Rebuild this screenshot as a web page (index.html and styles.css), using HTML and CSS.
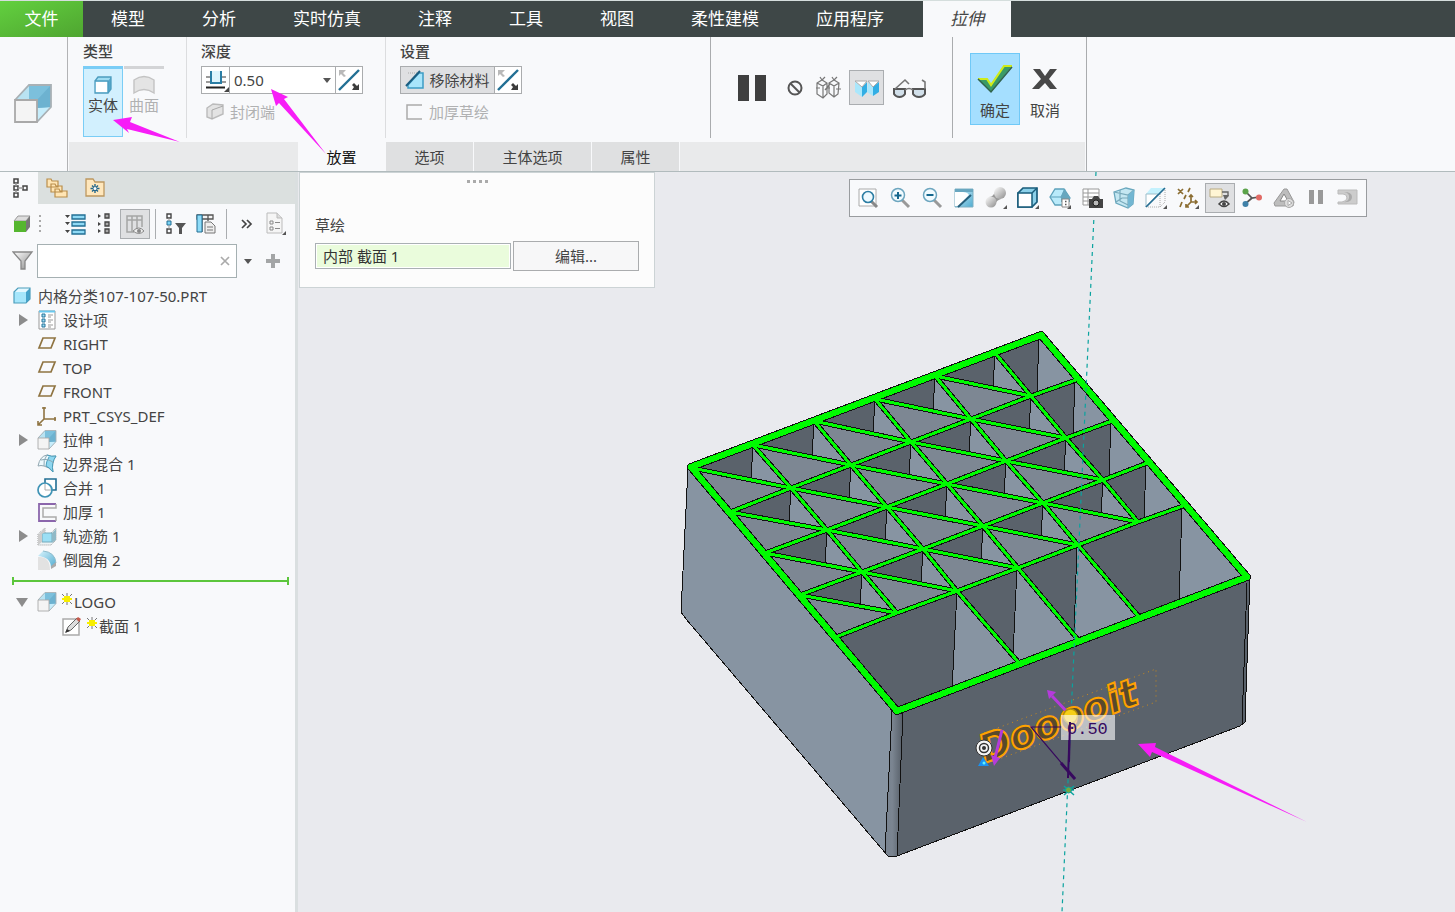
FILE: index.html
```html
<!DOCTYPE html>
<html lang="zh-CN">
<head>
<meta charset="utf-8">
<meta name="viewport" content="width=device-width, initial-scale=1">
<title>拉伸</title>
<link rel="stylesheet" href="styles.css">
</head>
<body>
<svg class="sprite" aria-hidden="true">
  <defs>
    <linearGradient id="blue" x1="0" y1="0" x2="1" y2="1"><stop offset="0" stop-color="#d9f4fd"/><stop offset="1" stop-color="#4fabd0"/></linearGradient>
    <linearGradient id="grey" x1="0" y1="0" x2="1" y2="1"><stop offset="0" stop-color="#ffffff"/><stop offset="1" stop-color="#8b8b8b"/></linearGradient>
    <symbol id="extrude" viewBox="0 0 40 40"><path d="M2 16 16 1h22v22L24 38z" fill="#7cc0dc"/><path d="M2 16 16 1v15z" fill="#b9e3f2"/><path d="M24 38V24l14-1z" fill="#c6edfb"/><path d="M24 16 38 1v22L24 24z" fill="#6db2d0"/><path d="M2 16 16 1h22v22L24 38" fill="none" stroke="#a9b1b5" stroke-width="1.800"/><path d="M2 16h22v22H2z" fill="#f4f4f4" stroke="#a9a9a9" stroke-width="1.800"/></symbol>
    <symbol id="plane" viewBox="0 0 20 20"><path d="M6 4h12l-4 10H2z" fill="none" stroke="#8f7442" stroke-width="1.700"/></symbol>
    <symbol id="flip" viewBox="0 0 24 24"><path d="M2 22 22 2" stroke="#226f94" stroke-width="2.400"/><path d="M2 2h7L6 5l3 3-2 1-3-3-2 2z" fill="#b9b9b9"/><path d="M22 22h-7l2-3-2-2 2-2 3 3 2-2z" fill="#3c3c3c"/></symbol>
    <symbol id="spark" viewBox="0 0 10 12"><path d="M0 1l10 10M10 1 0 11M5 0v12" stroke="#777" stroke-width="1"/><path d="M0 5h10v2H0zM2 3h6v6H2z" fill="#f7ee00"/></symbol>
    <symbol id="list" viewBox="0 0 22 22"><path d="M0 2h5L2.500 5zM0 9h5l-2.500 3zM0 17h5l-2.500 3z" fill="#444"/><g fill="#8ed9f5" stroke="#226f94" stroke-width="1.300"><path d="M7 2h13v4H7zM7 9h13v4H7zM7 17h13v4H7z"/></g></symbol>
  </defs>
</svg>

<header>
  <nav class="tabs">
    <button class="tab file">文件</button><button class="tab">模型</button><button class="tab">分析</button><button class="tab">实时仿真</button><button class="tab">注释</button><button class="tab">工具</button><button class="tab">视图</button><button class="tab">柔性建模</button><button class="tab">应用程序</button><button class="tab current">拉伸</button>
  </nav>
  <div class="ribbon">
    <div class="feature"><svg width="40" height="40"><use href="#extrude"/></svg></div>
    <div class="dashboard">
      <div class="groups">
        <section class="group type">
          <h2>类型</h2>
          <div class="row tight">
            <button class="kind on"><svg width="18" height="18" viewBox="0 0 18 18"><path d="M1 5 4 1h13l-3 4z" fill="#9edcf2"/><path d="M14 5l3-4v12l-3 4z" fill="#55a8cc"/><path d="M1 5h13v12H1zM1 5l3-4h13v12l-3 4" fill="none" stroke="#4c9cbe" stroke-width="1.300"/><path d="M2 6h11v10H2z" fill="#fff"/></svg>实体</button>
            <button class="kind" disabled><svg width="22" height="20" viewBox="0 0 22 20"><path d="M1 5q10-7 20 0v13q-10-7-20 0z" fill="#e4e4e4" stroke="#c3c3c3" stroke-width="1.400"/></svg>曲面</button>
          </div>
        </section>
        <section class="group depth">
          <h2>深度</h2>
          <div class="combo">
            <button aria-label="深度选项"><svg width="26" height="24" viewBox="0 0 26 24"><path d="M3 9h20M3 14h20" stroke="#9b9b9b" stroke-width="2"/><path d="M8 3h10v13H8z" fill="#dff5fd"/><path d="M8 3v12h10V3" fill="none" stroke="#2b7ea5" stroke-width="2"/><path d="M3 19.500h19" stroke="#222" stroke-width="2"/><path d="M26 19v5h-5z" fill="#444"/></svg></button>
            <input aria-label="深度值" value="0.50">
            <button class="drop" aria-label="深度列表"><i class="down"></i></button>
            <button aria-label="反向"><svg width="24" height="24"><use href="#flip"/></svg></button>
          </div>
          <button class="plain" disabled><svg width="18" height="18" viewBox="0 0 18 18"><path d="M1 5l6-4 10 1v9l-11 5-5-2z" fill="#e3e3e3" stroke="#bbb" stroke-width="1.400"/><path d="M6 7l11-4M6 7v9" stroke="#aaa" fill="none"/></svg>封闭端</button>
        </section>
        <section class="group setup">
          <h2>设置</h2>
          <div class="combo">
            <button class="remove"><svg width="20" height="20" viewBox="0 0 20 20"><path d="M3 3h12" stroke="#aaa" stroke-dasharray="1 1"/><path d="M18 3v15H3v-3L14 3z" fill="#a8e5fb" stroke="#3c9cc5" stroke-width="1.500"/><path d="M1 16 15 1" stroke="#1b5d80" stroke-width="2"/></svg>移除材料</button>
            <button aria-label="反向材料侧"><svg width="24" height="24"><use href="#flip"/></svg></button>
          </div>
          <button class="plain" disabled><svg width="18" height="18" viewBox="0 0 18 18"><path d="M17 2H2v14h15" fill="none" stroke="#aaa" stroke-width="1.500"/></svg>加厚草绘</button>
        </section>
        <section class="group preview">
          <button aria-label="暂停"><svg width="30" height="28"><path d="M1 1h11v26H1zM18 1h11v26H18z" fill="#3f3f3f"/></svg></button>
          <button class="none" aria-label="无预览"><svg width="18" height="18"><circle cx="9" cy="9" r="6.500" fill="none" stroke="#555" stroke-width="2"/><path d="M4.500 4.500l9 9" stroke="#555" stroke-width="2"/></svg></button>
          <button aria-label="分离"><svg width="26" height="24" viewBox="0 0 26 24"><path d="M2 7l5-3 5 3v11l-4 4-6-4zM2 7l6 3 4-3M8 10v12M14 7l5-3 5 3-1 11-4 3-5-4zM14 7l5 3 5-3M19 10v11M5 1l2 3M10 1 7 4M17 1l2 3M22 1l-3 3M1 12h4M21 13h5M12 12h3M10 14l5-6" fill="none" stroke="#777" stroke-width="1.200"/></svg></button>
          <button class="pressed" aria-label="连接"><svg width="26" height="20" viewBox="0 0 26 20"><path d="M1 4 8 9v10l-7-5zM14 4l5 5v9l-6-4z" fill="#a9e7fc"/><path d="M8 9l5-5v10l-5 5zM19 9l6-5v10l-6 4z" fill="#32aee4"/><path d="M1 3h12L8 9zM14 3h11l-6 6z" fill="#fff" stroke="#aaa"/></svg></button>
          <button aria-label="特征预览"><svg width="36" height="22" viewBox="0 0 36 22"><path d="M2 12h11v5q-2 3-5.500 3T2 17zM21 12h12v5q-2 3-6 3t-6-3z" fill="#d2e0ea" stroke="#555" stroke-width="2"/><path d="M13 13q4-3 8 0M3 12 13 3l4 4M33 12V5l-3-2" fill="none" stroke="#777" stroke-width="1.600"/></svg></button>
        </section>
        <section class="group finish">
          <button class="ok"><svg width="38" height="30" viewBox="0 0 38 30"><path d="M2 15h9l4 6L28 2h8L15 28z" fill="#3a9b67"/><path d="M2 15h9l4 6L28 2h8" fill="none" stroke="#cfec19" stroke-width="2.200"/><path d="M2 15l13 13L36 3" fill="none" stroke="#31634c" stroke-width="1.500"/></svg>确定</button>
          <button><svg width="26" height="30" viewBox="0 0 26 30"><path d="M1 5h7l5 7 5-7h7l-8 10 8 10h-7l-5-6-6 6H0l9-10z" fill="#484848"/></svg>取消</button>
        </section>
      </div>
      <nav class="subtabs"><button class="open">放置</button><button>选项</button><button>主体选项</button><button>属性</button></nav>
    </div>
    <svg class="pointers" width="400" height="180" aria-hidden="true"><path d="M113 120 132 117 130 122 180 142 127 129 129 133zM271 89 288 97 284 99 326 154 279 103 276 106z" fill="#f71df7"/></svg>
  </div>
</header>

<main>
  <aside>
    <div class="side-tabs">
      <button class="active" aria-label="模型树"><svg width="18" height="22" viewBox="0 0 18 22"><g fill="none" stroke="#444" stroke-width="1.500"><path d="M3 2h4v4H3zM3 9h4v4H3zM12 9h4v4h-4zM3 16h4v4H3z"/><path d="M5 6v3M5 13v3M7 11h5" stroke="#999"/></g></svg></button>
      <button aria-label="文件夹浏览器"><svg width="22" height="22" viewBox="0 0 22 22"><g fill="#ffe5b4" stroke="#ba8e4b" stroke-width="1.200"><path d="M1 2h4l1 2h6v6H1zM5 7h4l1 2h6v6H5zM9 12h4l1 2h7v6H9z"/></g></svg></button>
      <button aria-label="收藏夹"><svg width="22" height="20" viewBox="0 0 22 20"><path d="M2 4V1h7l2 3h9v14H2z" fill="#ffe7bc" stroke="#bd9860" stroke-width="1.300"/><path d="M11 6v9M6.500 10.500h9M8 7.500l6 6M14 7.500l-6 6" stroke="#24678c" stroke-width="1.400"/><circle cx="11" cy="10.500" r="1.500" fill="#fff"/></svg></button>
    </div>
    <div class="side-tools">
      <button aria-label="模型"><svg width="18" height="18" viewBox="0 0 18 18"><path d="M1 6 5 1h12l-4 5z" fill="#ddd" stroke="#999"/><path d="M13 6l4-5v11l-4 5z" fill="#777"/><path d="M1 6h12v11H1z" fill="#55b62f"/></svg></button>
      <svg class="grip" width="4" height="18"><path d="M2 0v18" stroke="#aaa" stroke-width="2" stroke-dasharray="2 3"/></svg>
      <button class="list" aria-label="展开"><svg width="22" height="22"><use href="#list"/></svg></button>
      <button aria-label="收起"><svg width="16" height="22" viewBox="0 0 16 22"><path d="M1 1l3 2-3 2zM1 9l3 2-3 2zM1 16l3 2-3 2z" fill="#444"/><path d="M8 1h4v4H8zM8 9h4v4H8zM8 16h4v4H8z" fill="#aaa" stroke="#444" stroke-width="1.300"/></svg></button>
      <button class="pressed" aria-label="树列"><svg width="20" height="22" viewBox="0 0 20 22"><path d="M2 3h15v4H2zM2 3v16h5V3M12 3v13M17 3v11M7 19h2" fill="none" stroke="#a5a5a5" stroke-width="1.500"/><path d="M8 18q6-6 11 0-5 5-11 0z" fill="#eee" stroke="#888"/><circle cx="14" cy="18" r="2" fill="#888"/></svg></button>
      <span class="bar"></span>
      <button aria-label="树过滤器"><svg width="22" height="22" viewBox="0 0 22 22"><path d="M2 1h4v4H2zM2 16h4v4H2z" fill="none" stroke="#444" stroke-width="1.400"/><path d="M2 8h4v4H2z" fill="#7bd4f5" stroke="#226f94"/><path d="M4 5v3M4 12v4" stroke="#999"/><path d="M10 10h11l-4 5v6h-3v-6z" fill="#555"/></svg></button>
      <button aria-label="列设置"><svg width="22" height="22" viewBox="0 0 22 22"><path d="M2 2h16v4H2zM7 2v17M13 2v6" fill="#f3f3f3" stroke="#555" stroke-width="1.300"/><path d="M2 2h5v17H2z" fill="#8edcf8" stroke="#226f94"/><path d="M10 9h6l4 4v7H10z" fill="#eee" stroke="#777"/><path d="M12 14h6M12 17h6" stroke="#777"/></svg></button>
      <span class="bar"></span>
      <button class="more" aria-label="更多"><svg width="12" height="10"><path d="M1 1l4 4-4 4M6 1l4 4-4 4" fill="none" stroke="#444" stroke-width="1.700"/></svg></button>
      <button class="report" aria-label="显示"><svg width="22" height="24" viewBox="0 0 22 24"><path d="M2 1h10l5 5v15H2z" fill="#f5f5f5" stroke="#bbb"/><path d="M12 1v5h5" fill="#ddd" stroke="#bbb"/><path d="M5 9h3v3H5zM5 15h3v3H5z" fill="none" stroke="#888"/><path d="M10 10.500h5M10 16.500h5" stroke="#888"/><path d="M21 19v4h-4z" fill="#555"/></svg></button>
    </div>
    <div class="search">
      <svg width="22" height="20" viewBox="0 0 22 20"><path d="M1 1h19l-7 9v8H9v-8z" fill="url(#grey)" stroke="#888" stroke-width="1.300"/></svg>
      <div class="box"><input aria-label="搜索模型树"><button aria-label="清除"><svg width="10" height="10"><path d="M1 1l8 8M9 1 1 9" stroke="#aaa" stroke-width="1.700"/></svg></button></div>
      <button aria-label="搜索选项"><i class="down"></i></button>
      <button class="add" aria-label="添加"><svg width="14" height="14"><path d="M7 0v14M0 7h14" stroke="#a3a5a6" stroke-width="4"/></svg></button>
    </div>
    <ul class="tree">
      <li class="root"><svg viewBox="0 0 20 20"><path d="M2 6 6 2h12l-4 4z" fill="#e4f8ff"/><path d="M14 6l4-4v11l-4 4z" fill="#45a3cb"/><path d="M2 6h12v11H2z" fill="#a6e6fb"/><path d="M2 6 6 2h12v11l-4 4H2z" fill="none" stroke="#4b9dbc" stroke-width="1.200"/></svg>内格分类107-107-50.PRT</li>
      <li><button class="twist" aria-label="展开设计项"></button><svg viewBox="0 0 20 20"><path d="M2 1h16v18H2z" fill="#fff" stroke="#999"/><path d="M2 1.500h16" stroke="#68c8ee" stroke-width="2"/><path d="M5 4h3v3H5zM5 9h3v3H5zM5 14h3v3H5z" fill="#9cdcf2" stroke="#28749b"/><path d="M11 5h5M11 7h3M11 10h5M11 12h3M11 15h5M11 17h3" stroke="#999"/></svg>设计项</li>
      <li><span class="twist none"></span><svg><use href="#plane"/></svg>RIGHT</li>
      <li><span class="twist none"></span><svg><use href="#plane"/></svg>TOP</li>
      <li><span class="twist none"></span><svg><use href="#plane"/></svg>FRONT</li>
      <li><span class="twist none"></span><svg viewBox="0 0 20 20"><path d="M7 1v12h12M7 13l-6 6M5 2h4M18 11v4M1 15v4h4" fill="none" stroke="#8f7442" stroke-width="1.600"/></svg>PRT_CSYS_DEF</li>
      <li><button class="twist" aria-label="展开拉伸 1"></button><svg><use href="#extrude"/></svg>拉伸 1</li>
      <li><span class="twist none"></span><svg viewBox="0 0 20 20"><path d="M1 12Q3 2 10 1q5 2 9 1-5 7-3 16-4-5-9-6-3-1-6 0z" fill="#eef9fd" stroke="#92a7b1"/><path d="M10 1q5 2 9 1-5 7-3 16-4-5-7-6 0-4 3-9" fill="#8ed6ef" stroke="#4a9dbb"/><path d="M4 6q7-2 13 3M10 1Q6 6 7 12" fill="none" stroke="#8ba8b4"/></svg>边界混合 1</li>
      <li><span class="twist none"></span><svg viewBox="0 0 20 20"><path d="M8 1h11v11h-3" fill="#fff"/><circle cx="8" cy="12" r="7" fill="#fff"/><path d="M8 5V1h11v11h-4" fill="none" stroke="#226f94" stroke-width="1.600"/><path d="M8 5v7h7" fill="none" stroke="#aaa"/><path d="M15 12a7 7 0 1 1-7-7q2 0 4 1.500 3 2 3 5.500" fill="none" stroke="#4094b6" stroke-width="1.700"/></svg>合并 1</li>
      <li><span class="twist none"></span><svg viewBox="0 0 20 20"><path d="M19 2H2v17h17" fill="none" stroke="#8b66ac" stroke-width="1.800"/><path d="M19 2v4H6v9h13v4" fill="none" stroke="#aaa" stroke-width="1.500"/></svg>加厚 1</li>
      <li><button class="twist" aria-label="展开轨迹筋 1"></button><svg viewBox="0 0 20 20"><path d="M1 19V8l7-6v8h3l8-8v12l-5 5H1" fill="#edf3f5" stroke="#999" stroke-dasharray="1 1"/><path d="M5 7h10v9H5z" fill="#9bdff5" stroke="#75aabc"/><path d="M15 7l4-4v11l-4 3z" fill="#90b9c7"/><path d="M1 9l7-7v4L5 8v8l-4 3z" fill="#ccc"/></svg>轨迹筋 1</li>
      <li><span class="twist none"></span><svg viewBox="0 0 20 20"><path d="M1 7q12-1 12 13H1z" fill="#e2e2e2"/><path d="M1 6 6 1q12 1 13 12l-5 5Q14 7 1 6z" fill="url(#blue)"/><path d="M6 1q12 1 13 12" fill="none" stroke="#8fbccc"/><path d="M14 19v-3l5-4v4z" fill="#aaa"/></svg>倒圆角 2</li>
      <li class="marker" aria-hidden="true"><span></span></li>
      <li><button class="twist expanded" aria-label="收起 LOGO"></button><svg><use href="#extrude"/></svg><svg class="spark"><use href="#spark"/></svg>LOGO</li>
      <li class="child"><svg viewBox="0 0 20 20"><path d="M1 3h16v16H1z" fill="#fff" stroke="#aaa" stroke-width="1.500"/><path d="M4 16l2-5L15 2l3 3-9 9z" fill="#ddd" stroke="#666"/><path d="M14 3l2-2 3 2-2 3z" fill="#c45a4d"/><path d="M3 17l2-4 3 2z" fill="#333"/></svg><svg class="spark"><use href="#spark"/></svg>截面 1</li>
    </ul>
  </aside>

  <section class="canvas" aria-label="图形窗口">
    <svg class="model" viewBox="298 172 1157 740" preserveAspectRatio="xMinYMin slice">
      <defs><linearGradient id="round"><stop offset="0" stop-color="#788390"/><stop offset=".4" stop-color="#7b8591"/><stop offset="1" stop-color="#555d66"/></linearGradient></defs>
      <g shape-rendering="crispEdges" stroke="#111" stroke-width="1">
        <path d="M688 468 681 612 686 619 887 855 897 711z" fill="#8794a2"/>
        <path d="M897 711 1250 576 1245 722 1240 726 897 856z" fill="#5a626b"/>
        <path d="M892 711 885 853 889 857 897 856 903 712z" fill="url(#round)"/>
        <path d="M1247 583 1242 724" fill="none"/>
      </g>
      <g id="lattice" shape-rendering="crispEdges"></g>
      <path d="M1096 172 1062 912" stroke="#0aa39f" stroke-dasharray="4 4" stroke-width="1.200" fill="none"/>
      <path d="M984 733 1156 669V702L988 763" fill="none" stroke="#c98a1d" stroke-dasharray="1 4"/>
      <text class="engraving" transform="translate(985 763) rotate(-21)">Dooooit</text>
      <g stroke="#37095e" fill="none"><path d="M1070 722 1068 778" stroke-width="2"/><path d="M1062 727H1031l44 52" stroke-width="1.200"/><path d="M1061 763l14 16" stroke-width="3"/></g>
      <g stroke="#b53bdb" fill="#b53bdb"><path d="M1069 714 1052 696M1002 730 995 758" stroke-width="3"/><path d="M1047 690l9 2-7 7zM994 766l-3-11 9 3z" stroke="none"/></g>
      <circle cx="1070.500" cy="716" r="7" fill="#f6cf16" stroke="#b28e09" stroke-width="1.500"/>
      <g><circle cx="984" cy="748" r="8" fill="#f5f5f5" stroke="#333"/><circle cx="984" cy="748" r="4.500" fill="none" stroke="#333" stroke-width="1.500"/><circle cx="984" cy="748" r="2" fill="#333"/><path d="M983 757l6 9h-11z" fill="#1a91f2"/><circle cx="984" cy="763" r="1.500" fill="#5ff1ff"/></g>
      <path d="M1064 786l10 9M1074 786l-10 9M1063 790h11" stroke="#0aa39f" stroke-width="1.500"/><circle cx="1068.500" cy="790" r="3" fill="#74a741" stroke="#0aa39f"/>
      <rect x="1061" y="715" width="54" height="25" fill="#fff" fill-opacity=".6"/>
      <text class="dimension" x="1067" y="734">0.50</text>
      <path d="M1070 722 1069 762" stroke="#37095e" stroke-width="2"/>
      <path d="M1138 744 1156 743 1155 747 1307 822 1152 752 1150 757z" fill="#f71df7"/>
    </svg>

    <form class="placement">
      <span class="dots" aria-hidden="true"><i></i><i></i><i></i><i></i></span>
      <label for="sketch">草绘</label>
      <div class="row"><input id="sketch" value="内部 截面 1"><button type="button">编辑...</button></div>
    </form>

    <div class="view-tools">
      <button aria-label="重新调整"><svg viewBox="0 0 22 22"><path d="M2 2h17v17H2z" fill="#fff" stroke="#aaa"/><path d="M14 14l6 6" stroke="#888" stroke-width="3"/><circle cx="11" cy="10" r="5.500" fill="#eefaff" stroke="#2d7ea4" stroke-width="1.600"/></svg></button>
      <button aria-label="放大"><svg viewBox="0 0 22 22"><path d="M13 13l7 7" stroke="#999" stroke-width="3"/><circle cx="9" cy="8" r="6.500" fill="#f1fbff" stroke="#6da6bf" stroke-width="1.500"/><path d="M9 5v7M5.500 8.500h7" stroke="#14678e" stroke-width="2"/></svg></button>
      <button aria-label="缩小"><svg viewBox="0 0 22 22"><path d="M13 13l7 7" stroke="#999" stroke-width="3"/><circle cx="9" cy="8" r="6.500" fill="#f1fbff" stroke="#6da6bf" stroke-width="1.500"/><path d="M5.500 8h7" stroke="#14678e" stroke-width="2"/></svg></button>
      <button aria-label="重画"><svg viewBox="0 0 22 22"><path d="M2 2h18v18H2z" fill="url(#blue)" stroke="#7fb0c3"/><path d="M2 5q12-1 14 3L6 19H2z" fill="#fff"/><path d="M5 20 18 8" stroke="#265f7b" stroke-width="2"/><path d="M2 2h18v3H2z" fill="#69a7c0"/></svg></button>
      <button aria-label="渲染"><svg viewBox="0 0 22 22"><path d="M4 10q4 0 6-5l6 7q-4 1-6 5z" fill="#999"/><circle cx="15" cy="6" r="6" fill="url(#grey)"/><circle cx="6" cy="15" r="5.500" fill="url(#grey)"/><path d="M22 18v4h-4z" fill="#555"/></svg></button>
      <button aria-label="显示样式"><svg viewBox="0 0 22 22"><path d="M1 6 6 1h14v14l-5 5H1z" fill="#8bd0e9" stroke="#195c7b" stroke-width="1.700"/><path d="M1 6h14v14H1z" fill="#fff" stroke="#195c7b" stroke-width="1.500"/><path d="M15 6l5-5" stroke="#195c7b" stroke-width="1.500"/><path d="M22 18v4h-4z" fill="#555"/></svg></button>
      <button aria-label="已保存方向"><svg viewBox="0 0 22 22"><path d="M1 10 6 2h9l6 9-5 7H6z" fill="#b9eafa" stroke="#5ca1bb" stroke-width="1.300"/><path d="M1 10h11l4-8M12 10l4 8" fill="none" stroke="#5ca1bb"/><path d="M15 2l6 9v4h-9v-5z" fill="#67a7be"/><path d="M13 12h7v8h-7z" fill="#fff" stroke="#888"/><path d="M16 14.500h1.500M16 17.500h1.500" stroke="#555" stroke-width="1.500"/><path d="M22 18v4h-4z" fill="#555"/></svg></button>
      <button aria-label="视图管理器"><svg viewBox="0 0 22 22"><path d="M2 2h16v16H2zM2 6h16M2 10h16M2 14h10M7 2v16" fill="#fff" stroke="#999"/><path d="M8 12h3l2-3h4l2 3h3v9H8z" fill="#444"/><circle cx="15" cy="16" r="3" fill="#bbb" stroke="#222"/></svg></button>
      <button aria-label="透视图"><svg viewBox="0 0 22 22"><path d="M1 5 13 1l8 2-1 14-5 4-12-5z" fill="#c4e7f2" stroke="#6aa8be" stroke-width="1.300"/><path d="M1 5l14 3 6-5M15 8v13M7 3v11l8 4M3 15l6-4h11" fill="none" stroke="#78a9ba" stroke-width="1.200"/><path d="M15 8l6-5-1 14-5 4z" fill="#72b6d2"/></svg></button>
      <button aria-label="截面"><svg viewBox="0 0 22 22"><path d="M1 7 6 1h14L6 16H1z" fill="#c4f1fd"/><path d="M1 7h12L1 20z" fill="#fff" stroke="#9dbdca"/><path d="M20 3v12l-5 5H2M15 7v13" fill="none" stroke="#aaa" stroke-dasharray="1 1"/><path d="M1 20 20 1" stroke="#256c91" stroke-width="1.700"/><path d="M22 18v4h-4z" fill="#555"/></svg></button>
      <button aria-label="基准显示"><svg viewBox="0 0 22 22"><path d="M1 2l5 5M6 2 1 7M13 1l-2 4M9 8l-2 4M5 15l-2 5M14 8v7h6M14 15l-5 5M12 10l2-2 2 2M18 13l2 2-2 2M9 17v3h3" fill="none" stroke="#8b6d32" stroke-width="1.700"/><path d="M22 18v4h-4z" fill="#555"/></svg></button>
      <button class="pressed" aria-label="注释显示"><svg viewBox="0 0 22 22"><path d="M1 2h12v8H1z" fill="#fff5d4" stroke="#b8aa82"/><path d="M13 5h6v4l-3 3" fill="none" stroke="#666" stroke-width="1.400"/><path d="M14 8h6l-4 5z" fill="#666"/><path d="M10 17q5-6 10 0-5 5-10 0z" fill="#fff" stroke="#444" stroke-width="1.500"/><circle cx="15" cy="17" r="2" fill="#444"/></svg></button>
      <button aria-label="旋转中心"><svg viewBox="0 0 22 22"><path d="M5 5l6 6 7-1M11 11l-7 6" fill="none" stroke="#555" stroke-width="1.700"/><circle cx="4.500" cy="4.500" r="3" fill="#5ba34a"/><circle cx="18" cy="10.500" r="3" fill="#e16a65"/><circle cx="4.500" cy="17" r="3" fill="#3f81a8"/></svg></button>
      <button aria-label="模拟"><svg viewBox="0 0 22 22"><path d="M11 2h3l7 13-1 4H2l-1-3z" fill="#bdbdbd" stroke="#999"/><path d="M11 7l4 7H7z" fill="#fff" stroke="#888"/><circle cx="16" cy="16" r="4.500" fill="#ddd" stroke="#aaa"/><path d="M15 13.500l4 2.500-4 2.500z" fill="#fff" stroke="#aaa"/></svg></button>
      <button aria-label="暂停模拟"><svg viewBox="0 0 22 22"><path d="M4 3h5v14H4zM13 3h5v14h-5z" fill="#999"/></svg></button>
      <button aria-label="模拟结果"><svg viewBox="0 0 22 22"><path d="M1 3h19v14H1v-2h4q5-1 5-4 0-4-4-4H1z" fill="#ccc" stroke="#bbb"/><path d="M7 5q6 1 5 6-1 4-6 4 9 1 9-5 0-5-8-5" fill="#aaa"/></svg></button>
    </div>
  </section>
</main>
<script src="lattice.js"></script>
</body>
</html>
```

FILE: styles.css
```css
* { box-sizing: border-box; }
body {
  margin: 0;
  min-height: 100vh;
  display: flex;
  flex-direction: column;
  overflow: hidden;
  background: #f8f9fb;
  color: #444;
  font: 15px/20px "Noto Sans", "Noto Sans CJK SC", sans-serif;
}
button, input { font: inherit; color: inherit; border: 0; padding: 0; background: none; min-width: 0; border-radius: 0; }
button { display: flex; align-items: center; justify-content: center; }
svg { display: block; flex: none; }
.sprite { position: absolute; width: 0; height: 0; }
.down { border: 4px solid transparent; border-top: 5px solid #555; border-bottom: 0; }
.pressed { background: #dfe0e2; border: 1px solid #aaadb0; }
.row { display: flex; }

.tabs { display: flex; height: 37px; background: #3e4747; border-top: 1px solid #d5dedd; color: #fff; font-size: 17px; }
.tab { padding: 0 29px 0 28px; white-space: nowrap; }
.file { width: 83px; padding: 0; background: linear-gradient(160deg, #62d03f, #4fa530); }
.current { width: 88px; padding: 0; margin-left: 10px; background: #f8f9fb; color: #444; font-style: italic; }

.ribbon { position: relative; display: flex; height: 135px; border-bottom: 1px solid #b1bbbd; }
.feature { width: 68px; padding: 47px 0 0 13px; border-right: 1px solid #b2b3b5; }
.dashboard { width: 1019px; display: flex; flex-direction: column; border-right: 1px solid #aaacae; }
.groups { flex: 1; display: flex; }
.group { padding: 4px 0 0 14px; margin-bottom: 4px; border-right: 1px solid #dcdddf; }
.group h2 { margin: 0 0 5px; font-size: 15px; font-weight: 500; line-height: 20px; color: #444; }
.type { width: 119px; padding-left: 15px; }
.depth { width: 199px; }
.setup { width: 325px; border-right-color: #aaacae; }
.tight { gap: 1px; }
.kind { width: 40px; height: 71px; flex-direction: column; justify-content: flex-start; padding-top: 6px; border-top: 3px solid #d3d4d6; }
.kind svg { height: 20px; }
.kind.on { background: #d2f0fe; border: 1px solid #7acdf6; border-top-width: 3px; }
.kind:disabled, .plain:disabled { color: #b0b1b2; }
.combo { display: flex; width: max-content; height: 28px; border: 1px solid #aaacae; background: #fff; }
.combo > button + button, .combo input { border-left: 1px solid #aaacae; }
.combo button { min-width: 27px; }
.combo input { width: 90px; padding-left: 4px; }
.combo .drop { min-width: 16px; border-left: 0; }
.combo .remove { width: 93px; gap: 4px; background: #dfe0e2; }
.plain { gap: 6px; margin: 8px 0 0 5px; }
.preview { width: 242px; display: flex; align-items: center; gap: 8px; padding: 0 0 0 26px; border-right-color: #aaacae; }
.preview button:first-child { margin-right: 8px; }
.preview .none { width: 24px; }
.preview .pressed { width: 35px; height: 35px; }
.finish { flex: 1; display: flex; align-items: flex-start; padding: 16px 0 0 17px; border: 0; }
.finish button { width: 50px; height: 72px; flex-direction: column; gap: 6px; padding-top: 6px; }
.finish .ok { background: #a5dfff; border: 1px solid #70c9f7; }
.subtabs { display: flex; height: 29px; margin: 0 1px; padding-left: 229px; background: #e9eaeb; }
.subtabs button { width: 88px; background: #dfe0e1; border-right: 1px solid #f8f9fb; }
.subtabs button:nth-child(3) { width: 118px; }
.subtabs .open { background: #f8f9fb; color: #111; }
.pointers { position: absolute; left: 0; top: -37px; pointer-events: none; }

main { flex: 1; display: flex; min-height: 0; }
aside { width: 298px; border-right: 3px solid #dadfe0; }
.side-tabs { display: flex; height: 32px; background: #dbe0df; }
.side-tabs button { width: 38px; }
.side-tabs .active { padding-left: 2px; background: #f8f9fb; }
.side-tools { display: flex; align-items: center; height: 40px; padding-left: 13px; }
.grip { margin-left: 7px; }
.list { margin-left: 23px; }
.side-tools .list + button { margin-left: 10px; }
.side-tools .pressed { width: 30px; height: 30px; margin-left: 7px; }
.bar { width: 1px; height: 30px; margin: 0 9px 0 5px; background: #aaadb0; }
.bar + button + button { margin-left: 8px; }
.bar ~ .bar { margin: 0 14px 0 9px; }
.bar + .more + .report { margin-left: 12px; }
.search { display: flex; align-items: center; height: 34px; padding-left: 12px; }
.box { display: flex; width: 200px; height: 34px; margin: 0 7px 0 3px; padding-right: 6px; border: 1px solid #a5b0b2; background: #fff; }
.box input { flex: 1; padding-left: 6px; }
.add { margin-left: 14px; }
.tree { list-style: none; margin: 0; padding: 6px 0 0 12px; }
.tree li { display: flex; align-items: center; height: 24px; white-space: nowrap; }
.tree svg { width: 20px; height: 20px; margin-right: 6px; }
.tree .spark { width: 10px; height: 12px; margin: 0 2px 6px -1px; }
.twist { width: 10px; margin: 0 8px 0 7px; border: 6px solid transparent; border-left: 9px solid #8c8c8c; border-right: 0; }
.twist.none { border-color: transparent; }
.twist.expanded { width: 12px; margin: 0 9px 0 4px; border: 6px solid transparent; border-top: 9px solid #8c8c8c; border-bottom: 0; }
.tree .child { padding-left: 50px; }
.tree .marker { height: 18px; }
.marker span { width: 277px; height: 8px; border: solid #5cc63c; border-width: 0 2px; background: linear-gradient(#5cc63c, #5cc63c) center / 100% 2px no-repeat; }

.canvas { position: relative; flex: 1; min-width: 0; overflow: hidden; background: #e9eaee; }
.model { position: absolute; inset: 0; width: 100%; height: 100%; }
.engraving { font: italic bold 38px "DejaVu Sans", sans-serif; fill: #59492b; stroke: #ffa200; stroke-width: 2px; }
.dimension { font: 17px "Liberation Mono", monospace; fill: #37095e; }
.placement { position: absolute; left: 1px; top: 0; width: 356px; height: 116px; padding: 7px 15px; border: 1px solid #ccd3d5; background: #fcfcfc; }
.dots { display: flex; justify-content: center; gap: 3px; height: 3px; margin-bottom: 32px; }
.dots i { width: 3px; background: #aaa; }
.placement label { display: block; margin-bottom: 6px; }
.placement .row { gap: 2px; align-items: center; }
.placement input { width: 196px; height: 26px; padding: 0 0 2px 7px; border: 1px solid #aab0b4; outline: 1px solid #fff; outline-offset: -2px; background: #eafcdc; color: #333; }
.placement button { flex: 1; height: 30px; border: 1px solid #aaacae; background: #f7f7f8; }
.view-tools { position: absolute; right: 88px; top: 7px; display: flex; height: 38px; padding: 0 2px; align-items: center; border: 1px solid #999c9f; background: #f8f9fb; }
.view-tools button { width: 32px; height: 36px; }
.view-tools .pressed { width: 30px; height: 30px; margin: 0 1px; }
.view-tools svg { width: 22px; height: 22px; }
```

FILE: lattice.js
```js
// Wall crossings of the box, row by row from the back edge to the front compartment.
const rows = [
  [[692, 468], [753, 445], [814, 421], [875, 399], [935, 376], [995, 353], [1040, 336]],
  [[730, 512], [791, 488], [851, 465], [911, 442], [971, 419], [1031, 396], [1076, 380]],
  [[765, 553], [827, 530], [887, 507], [947, 484], [1006, 461], [1066, 438], [1112, 421]],
  [[800, 595], [862, 572], [923, 549], [983, 526], [1043, 503], [1103, 480], [1147, 463]],
  [[836, 637], [897, 613], [957, 591], [1018, 568], [1078, 545], [1138, 522], [1183, 506]]
];
const rim = [[691, 467], [1041, 335], [1247, 577], [897, 711]];
const front = [[1020, 664], [1080, 642], [1141, 619]];
const dark = "#5a626b", mid = "#7d8793", light = "#8794a2";
const out = [];
const poly = (points, fill) => out.push(`<polygon points="${points.join(" ")}" fill="${fill}"/>`);
const edge = (a, b) => out.push(`<path d="M${a}L${b}" stroke="#111"/>`);

poly(rim, light);
for (let r = 0; r < 4; r++) {
  for (let c = 0; c < 5; c++) {
    const a = rows[r][c], b = rows[r][c + 1], d = rows[r + 1][c + 1];
    const t = (b[0] - 2 - a[0]) / (d[0] - a[0]);
    const foot = [b[0] - 2, a[1] + t * (d[1] - a[1])];
    poly([a, rows[r + 1][c], d], mid);
    poly([a, b, foot], dark);
    edge(b, foot);
  }
  const a = rows[r][5], b = rows[r][6], d = rows[r + 1][5];
  const foot = [b[0] - 3, d[1] - 3];
  poly([a, [b[0] - 1, b[1]], foot, d], dark);
  edge([b[0] - 1, b[1]], foot);
}
const deep = [
  [[836, 637], [957, 591], [952, 690], [897, 711]],
  [[957, 591], [1017, 568], [1013, 656], [1020, 664]],
  [[1018, 568], [1077, 545], [1074, 635], [1080, 642]],
  [[1078, 545], [1182, 506], [1179, 604], [1141, 619]]
];
for (const wall of deep) {
  poly(wall, dark);
  edge(wall[1], wall[2]);
}

let walls = "";
for (let r = 1; r < 5; r++) walls += `M${rows[r][0]}L${rows[r].slice(1).join(" ")}`;
for (let c = 1; c < 6; c++) {
  const line = rows.map(row => row[c]);
  if (c > 1 && c < 5) line.push(front[c - 2]);
  walls += `M${line[0]}L${line.slice(1).join(" ")}`;
}
for (let r = 0; r < 4; r++)
  for (let c = 0; c < 5; c++) walls += `M${rows[r][c]}L${rows[r + 1][c + 1]}`;
const outline = `M${rim[0]}L${rim.slice(1).join(" ")}Z`;
const stroke = (d, color, width) =>
  out.push(`<path d="${d}" fill="none" stroke="${color}" stroke-width="${width}" stroke-linejoin="round"/>`);
stroke(walls, "#111", 5);
stroke(outline, "#111", 8);
stroke(walls, "#00fb00", 3);
stroke(outline, "#00fb00", 6);
document.getElementById("lattice").innerHTML = out.join("");
```
